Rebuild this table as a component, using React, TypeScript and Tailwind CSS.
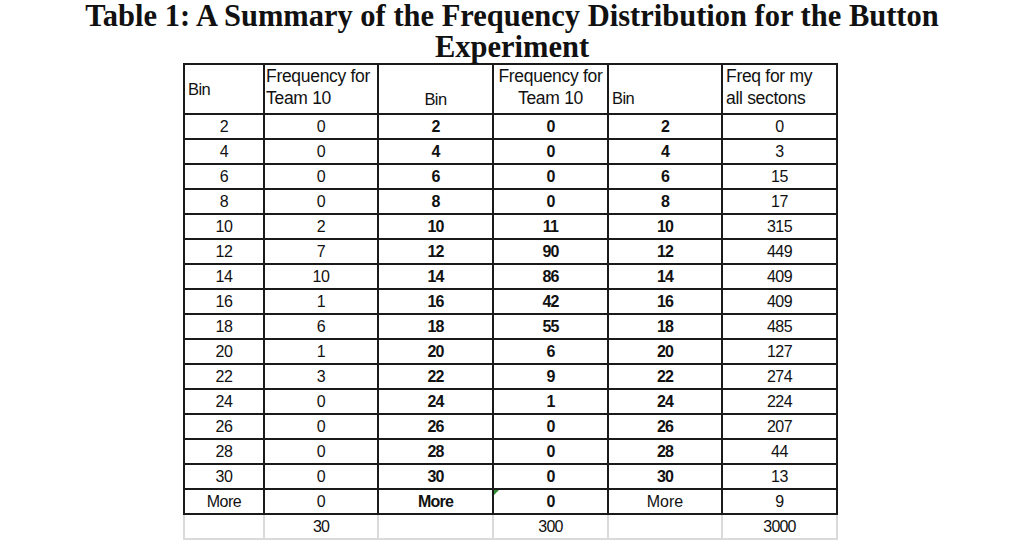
import React from "react";

const bins = ["2", "4", "6", "8", "10", "12", "14", "16", "18", "20", "22", "24", "26", "28", "30", "More"];
const team10 = [0, 0, 0, 0, 2, 7, 10, 1, 6, 1, 3, 0, 0, 0, 0, 0];
const team10b = [0, 0, 0, 0, 11, 90, 86, 42, 55, 6, 9, 1, 0, 0, 0, 0];
const all = [0, 3, 15, 17, 315, 449, 409, 409, 485, 127, 274, 224, 207, 44, 13, 9];

const cell = "bg-white h-[23px] leading-[23px] text-center";

export default function App() {
  return (
    <div className="w-[1024px] h-[545px] bg-white overflow-hidden text-[#111]">
      <h1
        className="text-center font-bold text-[30.5px] leading-[31px] pt-[1px] h-[63px] text-[#111]"
        style={{ fontFamily: '"Liberation Serif", "Times New Roman", serif' }}
      >
        Table 1: A Summary of the Frequency Distribution for the Button
        <br />
        Experiment
      </h1>
      <div
        className="ml-[183px] w-[655px] text-[16px]"
        style={{ fontFamily: '"Liberation Sans", Arial, sans-serif' }}
      >
        <div className="grid grid-cols-[78px_112px_113px_113px_112px_113px] gap-[2px] p-[2px] bg-[#1a1a1a]">
          <div className="bg-white h-[48px] flex items-center pl-[3px] text-[16.5px] tracking-[-0.6px]">Bin</div>
          <div className="bg-white h-[48px] pl-[1px] leading-[22px] text-[17.5px] tracking-[-0.3px]">
            Frequency for
            <br />
            Team 10
          </div>
          <div className="bg-white h-[48px] flex items-end justify-center pb-[1px] text-[16.5px] tracking-[-0.6px]">Bin</div>
          <div className="bg-white h-[48px] text-center leading-[22px] text-[17.5px] tracking-[-0.3px]">
            Frequency for
            <br />
            Team 10
          </div>
          <div className="bg-white h-[48px] flex items-end pl-[3px] pb-[2px] text-[16.5px] tracking-[-0.6px]">Bin</div>
          <div className="bg-white h-[48px] pl-[3px] leading-[22px] text-[17.5px] tracking-[-0.3px]">
            Freq for my
            <br />
            all sectons
          </div>
          {bins.map((b, i) => (
            <React.Fragment key={b}>
              <div className={`${cell} tracking-[-0.5px]`}>{b}</div>
              <div className={`${cell} tracking-[-0.5px]`}>{team10[i]}</div>
              <div className={`${cell} font-bold tracking-[-0.8px]`}>{b}</div>
              <div className={`${cell} font-bold tracking-[-0.8px] relative`}>
                {team10b[i]}
                {b === "More" && (
                  <svg className="absolute left-0 top-0" width="6" height="6" viewBox="0 0 6 6">
                    <path d="M0 5 L5 0 L0 0 Z" fill="#2e8b2e" />
                  </svg>
                )}
              </div>
              <div className={`${cell} ${b === "More" ? "" : "font-bold tracking-[-0.8px]"}`}>{b}</div>
              <div className={`${cell} tracking-[-0.5px]`}>{all[i]}</div>
            </React.Fragment>
          ))}
        </div>
        <div className="grid grid-cols-[78px_112px_113px_113px_112px_113px] gap-x-[2px] px-[2px] pb-[2px] bg-[#dadada]">
          <div className={cell}></div>
          <div className={`${cell} tracking-[-0.8px]`}>30</div>
          <div className={cell}></div>
          <div className={`${cell} tracking-[-0.8px]`}>300</div>
          <div className={cell}></div>
          <div className={`${cell} tracking-[-0.8px]`}>3000</div>
        </div>
      </div>
    </div>
  );
}
